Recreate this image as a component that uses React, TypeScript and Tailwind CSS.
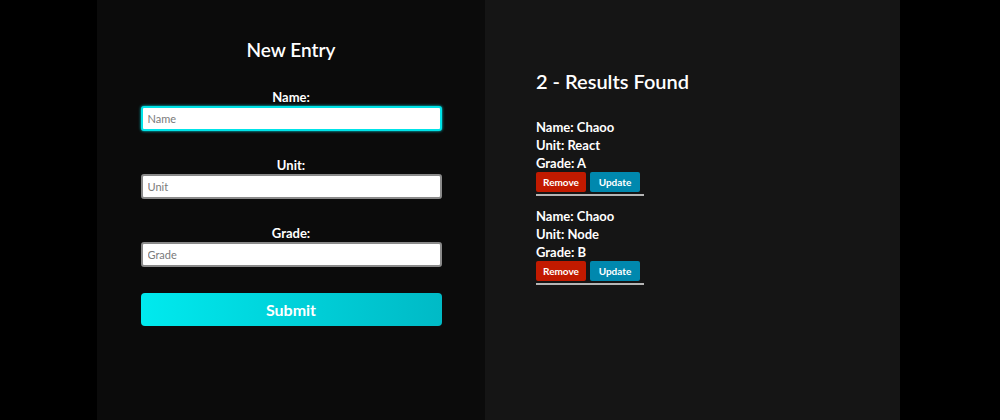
const font = { fontFamily: "Lato, 'Noto Sans', sans-serif" };

const fields = [
  { label: "Name:", placeholder: "Name", focused: true },
  { label: "Unit:", placeholder: "Unit", focused: false },
  { label: "Grade:", placeholder: "Grade", focused: false },
];

const results = [
  { name: "Chaoo", unit: "React", grade: "A" },
  { name: "Chaoo", unit: "Node", grade: "B" },
];

export default function App() {
  return (
    <div className="w-[1000px] h-[420px] bg-black flex overflow-hidden" style={font}>
      <div className="ml-[97px] w-[388px] h-full bg-[#0b0b0b] flex flex-col items-center">
        <h1 className="mt-[38px] text-[19px] leading-[24px] font-semibold text-white">
          New Entry
        </h1>
        <form className="w-[301px] mt-[27px] flex flex-col">
          {fields.map((f, i) => (
            <div key={f.label} className={`flex flex-col ${i > 0 ? "mt-[26px]" : ""}`}>
              <label className="text-center text-[13px] leading-[16px] font-bold text-white mb-[1px]">
                {f.label}
              </label>
              <input
                type="text"
                placeholder={f.placeholder}
                className={`h-[25px] w-full bg-white rounded-[3px] px-[5px] text-[11px] text-black placeholder-[#7a7a7a] outline-none border-2 ${
                  f.focused
                    ? "border-[#00e3e8] shadow-[0_0_3px_#00e3e8]"
                    : "border-[#8a8a8a]"
                }`}
              />
            </div>
          ))}
          <button
            type="button"
            className="mt-[26px] h-[33px] w-full rounded-[4px] bg-gradient-to-r from-[#00eaee] to-[#00bac6] text-white text-[16px] font-bold"
          >
            Submit
          </button>
        </form>
      </div>

      <div className="w-[415px] h-full bg-[#151515] pl-[51px]">
        <h2 className="mt-[69px] text-[20px] leading-[24px] font-semibold text-white">
          2 - Results Found
        </h2>
        <div className="mt-[25px] flex flex-col">
          {results.map((r, i) => (
            <div
              key={i}
              className={`w-[108px] pb-[2px] border-b-2 border-[#b5b5b5] ${i > 0 ? "mt-[11px]" : ""}`}
            >
              <div className="text-[13px] leading-[18px] font-bold text-white">
                <p>Name: {r.name}</p>
                <p>Unit: {r.unit}</p>
                <p>Grade: {r.grade}</p>
              </div>
              <div className="flex gap-[4px]">
                <button
                  type="button"
                  className="h-[20px] w-[50px] rounded-[2px] bg-[#c21a00] text-white text-[10px] font-bold"
                >
                  Remove
                </button>
                <button
                  type="button"
                  className="h-[20px] w-[50px] rounded-[2px] bg-[#0088ae] text-white text-[10px] font-bold"
                >
                  Update
                </button>
              </div>
            </div>
          ))}
        </div>
      </div>
    </div>
  );
}
